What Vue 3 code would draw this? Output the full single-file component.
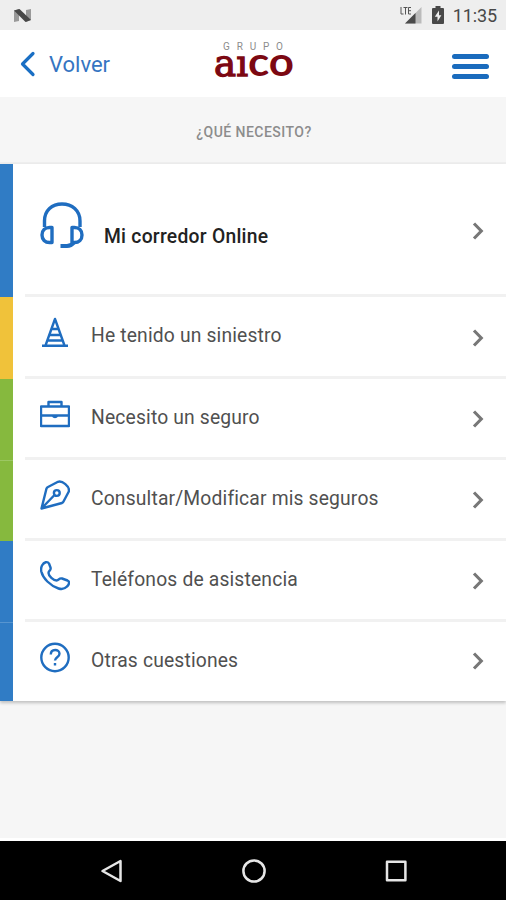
<script setup>
const rows = [
  { id: 'headset', label: 'Mi corredor Online', tone: 'blue', main: true },
  { id: 'cone', label: 'He tenido un siniestro', tone: 'yellow' },
  { id: 'case', label: 'Necesito un seguro', tone: 'green' },
  { id: 'pen', label: 'Consultar/Modificar mis seguros', tone: 'green' },
  { id: 'phone', label: 'Teléfonos de asistencia', tone: 'blue' },
  { id: 'help', label: 'Otras cuestiones', tone: 'blue' },
]
</script>

<template>
  <div class="screen">
    <div class="status">
      <svg class="nougat" width="20" height="16" viewBox="0 0 20 16">
        <path d="M1 3.500 6 2v12l-5 1zM13 3l5-1v11l-5 2z" fill="#999" />
        <path d="M1 3.500 6.500 2 18 13l-5.500 2z" fill="#484848" />
      </svg>
      <div class="indicators">
        <svg width="22" height="18" viewBox="0 0 22 18">
          <path d="M21.500 1v16.500H5z" fill="#bbb" />
          <path d="M15.500 7v10.500H5z" fill="#4b4b4b" />
          <path d="M1 1v7h2.500M3.500 1.500h4M5.500 1.500V8.500M11 1.500H8.500v6.500H11M8.500 4.700H11" fill="none" stroke="#555" stroke-width="1" />
        </svg>
        <svg class="battery" width="12" height="18" viewBox="0 0 12 18">
          <path d="M3.500 0h5v2H11a1 1 0 0 1 1 1v14a1 1 0 0 1-1 1H1a1 1 0 0 1-1-1V3a1 1 0 0 1 1-1h2.500z" fill="#484848" />
          <path d="M7 4.500 2.800 10.800h2.700V15.500L9.400 9.200H7z" fill="#eee" />
        </svg>
        <span class="clock">11:35</span>
      </div>
    </div>

    <header class="header">
      <div class="back">
        <svg width="17" height="26" viewBox="0 0 17 26">
          <path d="M14 2.500 3.500 13 14 23.500" fill="none" stroke="#1a6fc4" stroke-width="3.200" stroke-linecap="round" stroke-linejoin="round" />
        </svg>
        <span>Volver</span>
      </div>
      <svg class="logo" width="90" height="67" viewBox="0 0 90 67">
        <text class="grupo" x="15" y="20" textLength="60">GRUPO</text>
        <text class="slab" x="6" y="45.500" textLength="34" lengthAdjust="spacingAndGlyphs">aı</text>
        <text class="round" x="40" y="45.500" textLength="46" lengthAdjust="spacingAndGlyphs">co</text>
      </svg>
      <div class="menu"><i></i><i></i><i></i></div>
    </header>

    <h1 class="title">¿QUÉ NECESITO?</h1>

    <main class="list">
      <div v-for="row in rows" :key="row.id" class="row" :class="[row.tone, { main: row.main }]">
        <div class="body">
          <svg v-if="row.id === 'headset'" class="icon" width="44" height="48" viewBox="0 0 44 48">
            <path d="M4.500 25V19C4.500 8.500 12 2 22 2s18 6.500 18 17v6" stroke-width="3.400" />
            <path d="M12 25.500v15H9.500C5 40.500 2 37.500 2 33s3-7.500 7.500-7.500zM32 25.500v15h2.500c4.500 0 7.500-3 7.500-7.500s-3-7.500-7.500-7.500z" stroke-width="3.400" />
            <path d="M34 40.500c-2 2.500-4 3.500-7 3.500H20.500" stroke-width="4" />
          </svg>
          <svg v-else-if="row.id === 'cone'" class="icon" width="30" height="32" viewBox="0 0 30 32">
            <path d="M2 29.800h26M5.500 29.500 15 3l9.500 26.500M12 13h6M10 19h10M8 24.500h14" />
          </svg>
          <svg v-else-if="row.id === 'case'" class="icon" width="30" height="32" viewBox="0 0 30 32">
            <path d="M1 8.500h28v19.500H1zM8.500 8.500V4h13v4.500M1 17.500h28M12.500 17.500q2.500 3 5 0" />
          </svg>
          <svg v-else-if="row.id === 'pen'" class="icon" width="30" height="32" viewBox="0 0 30 32">
            <path d="M1.500 29.500 6.500 9.500Q7 8.500 8 8L18 2.800C22 1.500 30 7 28.800 12.500L23.500 22.500Q23 23.500 22 24zM1.500 29.500 14.500 16" />
            <circle cx="16.800" cy="14" r="2.900" />
          </svg>
          <svg v-else-if="row.id === 'phone'" class="icon" width="30" height="32" viewBox="0 0 30 32">
            <path d="M2 5.500C4 2 7.500 1 9 3.500l1.500 4c1 3-2 3-2 5.500 0 3 5 7.500 8 7.500 2.500 0 2.500-3 5.500-2l5.500 2c2.500 1 1.700 4-.5 6-2.500 2.700-5.500 3-8.500 2C10 25.500 3 18.500 1.300 11.500 .8 9 1 7.500 2 5.500z" />
          </svg>
          <svg v-else class="icon" width="30" height="32" viewBox="0 0 30 32">
            <circle cx="15" cy="16.500" r="13.700" />
            <path d="M10.800 13.500c0-6 8.700-5.700 8.700-.8 0 3.500-4.500 3.500-4.500 6.800M15 22v2.500" />
          </svg>
          <span class="label">{{ row.label }}</span>
          <svg class="chevron" width="12" height="20" viewBox="0 0 12 20">
            <path d="M2 2.500 9.300 10 2 17.500" fill="none" stroke="#777" stroke-width="3.100" />
          </svg>
        </div>
      </div>
    </main>

    <footer class="nav">
      <svg width="24" height="24" viewBox="0 0 24 24"><path d="M21.500 2v20L3.500 12z" /></svg>
      <svg width="24" height="24" viewBox="0 0 24 24"><circle cx="12" cy="12" r="10.600" /></svg>
      <svg width="24" height="24" viewBox="0 0 24 24"><rect x="3" y="2.800" width="18.400" height="18.400" /></svg>
    </footer>
  </div>
</template>

<style>
body {
  margin: 0;
}
</style>

<style scoped>
.screen {
  display: flex;
  flex-direction: column;
  width: 506px;
  height: 900px;
  overflow: hidden;
  background: #f6f6f6;
  font-family: Roboto, "Liberation Sans", sans-serif;
}
.status {
  box-sizing: border-box;
  display: flex;
  align-items: center;
  justify-content: space-between;
  height: 30px;
  padding: 0 9px 0 13px;
  background: #eee;
}
.indicators {
  display: flex;
  align-items: center;
}
.battery {
  margin: 0 9px 0 10px;
}
.clock {
  font-size: 18px;
  line-height: 30px;
  color: #484848;
  padding-top: 2px;
  letter-spacing: -0.1px;
}
.header {
  box-sizing: border-box;
  display: grid;
  grid-template-columns: 1fr 90px 1fr;
  height: 67px;
  background: #fff;
}
.back {
  display: flex;
  align-items: center;
  height: 68px;
  padding-left: 19px;
  gap: 13px;
  font-size: 22px;
  color: #3575c2;
}
.logo {
  overflow: visible;
}
.grupo {
  font-size: 10px;
  fill: #8c8c8c;
}
.slab {
  font: 38px "DejaVu Serif", serif;
  fill: #7c0812;
  stroke: #7c0812;
  stroke-width: 1.3;
}
.round {
  font: bold 40px Lato, sans-serif;
  fill: #7c0812;
}
.menu {
  display: flex;
  flex-direction: column;
  gap: 5px;
  justify-self: end;
  width: 37px;
  padding: 24px 17px 0 0;
}
.menu i {
  height: 5px;
  border-radius: 3px;
  background: #1a6bbd;
}
.title {
  box-sizing: border-box;
  height: 67px;
  margin: 0;
  padding-left: 2px;
  border-bottom: 2px solid #eee;
  text-align: center;
  font-size: 14px;
  font-weight: 500;
  line-height: 70px;
  letter-spacing: 0.460px;
  color: #8c8c8c;
}
.list {
  background: #fff;
  box-shadow: 0 2px 3px rgba(0, 0, 0, 0.22);
}
.row {
  box-sizing: border-box;
  height: 81px;
  padding-left: 25px;
  background: linear-gradient(to right, var(--tone) 13px, #fff 13px);
}
.row:nth-child(2) {
  height: 82px;
}
.row:last-child {
  height: 79px;
}
.row.main {
  height: 133px;
}
.row:nth-child(4) {
  background: linear-gradient(#9cc763, #9cc763) 0 0 / 13px 1px no-repeat, linear-gradient(to right, var(--tone) 13px, #fff 13px);
}
.row:last-child {
  background: linear-gradient(#5795d0, #5795d0) 0 0 / 13px 1px no-repeat, linear-gradient(to right, var(--tone) 13px, #fff 13px);
}
.blue {
  --tone: #307cc5;
}
.yellow {
  --tone: #f0c23a;
}
.green {
  --tone: #86b93e;
}
.body {
  box-sizing: border-box;
  display: flex;
  align-items: center;
  height: 100%;
  padding: 0 22px 0 15px;
  border-bottom: 3px solid #f1f1f1;
}
.row:last-child .body {
  border-bottom-color: #fff;
}
.icon {
  flex: none;
  margin-bottom: 9px;
  fill: none;
  stroke: #1f6dc0;
  stroke-width: 2.400;
  stroke-linejoin: round;
}
.main .icon {
  margin-bottom: 6px;
}
.row:last-child .icon {
  margin-bottom: 7px;
}
.label {
  flex: 1;
  margin-left: 21px;
  padding-bottom: 1px;
  font-size: 19.300px;
  font-weight: 400;
  letter-spacing: 0.160px;
  color: #505050;
  white-space: nowrap;
}
.row:nth-child(2) .label {
  padding-bottom: 3px;
}
.row:last-child .label {
  padding-bottom: 0;
}
.main .label {
  padding-top: 14px;
  padding-bottom: 0;
  margin-left: 20px;
  font-weight: 500;
  letter-spacing: 0.260px;
  color: #222;
}
.chevron {
  margin-top: 2px;
}
.main .chevron {
  margin-top: 4px;
}
.nav {
  box-sizing: border-box;
  display: flex;
  justify-content: space-between;
  height: 62px;
  margin-top: auto;
  padding: 18px 98px 0 99px;
  background: #000;
  border-top: 3px solid #fff;
}
.nav svg {
  fill: none;
  stroke: #e6e6e6;
  stroke-width: 2.500;
  stroke-linejoin: round;
}
</style>
